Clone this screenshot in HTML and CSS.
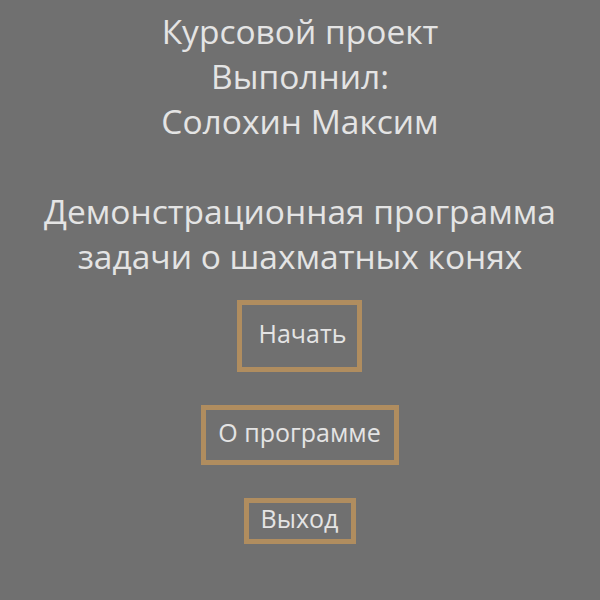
FILE: index.html
```html
<!DOCTYPE html>
<html lang="ru">
<head>
<meta charset="utf-8">
<title>Задача о шахматных конях</title>
<link rel="stylesheet" href="styles.css">
</head>
<body>
<main class="menu">
  <div class="title">
    <p>Курсовой проект</p>
    <p>Выполнил:</p>
    <p>Солохин Максим</p>
    <p class="blank">&nbsp;</p>
    <p>Демонстрационная программа</p>
    <p>задачи о шахматных конях</p>
  </div>
  <div class="buttons">
    <button class="btn btn-start">Начать</button>
    <button class="btn btn-about">О программе</button>
    <button class="btn btn-exit">Выход</button>
  </div>
</main>
</body>
</html>
```

FILE: styles.css
```css
html, body {
  margin: 0;
  padding: 0;
  background: #707070;
}
body {
  width: 600px;
  height: 600px;
  overflow: hidden;
  font-family: "Open Sans", "DejaVu Sans", sans-serif;
  color: #e4e4e4;
}
.menu {
  display: flex;
  flex-direction: column;
  align-items: center;
  padding-top: 9px;
}
.title {
  text-align: center;
  font-size: 33.5px;
  line-height: 45px;
}
.title p {
  margin: 0;
  white-space: nowrap;
}
.buttons {
  margin-top: 21px;
  display: flex;
  flex-direction: column;
  align-items: center;
  gap: 33px;
  margin-left: -1px;
}
.btn {
  box-sizing: border-box;
  background: transparent;
  border: 5px solid #b08d5f;
  color: #e4e4e4;
  font-family: "Open Sans", "DejaVu Sans", sans-serif;
  font-size: 25px;
  padding: 0 0 6px;
  display: flex;
  align-items: center;
  justify-content: center;
}
.btn-start {
  width: 125px;
  height: 72px;
  padding-left: 6px;
}
.btn-about {
  width: 198px;
  height: 60px;
}
.btn-exit {
  width: 112px;
  height: 46px;
}
```
